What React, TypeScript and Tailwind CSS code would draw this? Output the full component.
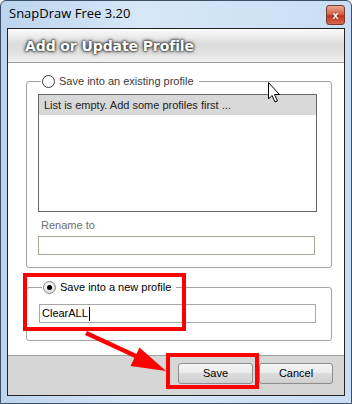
import React from "react";

const ui = "font-['Liberation_Sans',Arial,sans-serif]";

const Radio: React.FC<{ checked?: boolean }> = ({ checked }) => (
  <span
    className={`inline-flex h-[13px] w-[13px] items-center justify-center rounded-full border ${
      checked
        ? "border-[#8a8a8a] bg-[radial-gradient(circle_at_40%_35%,#ffffff,#cfcfcf)]"
        : "border-[#3c3c3c] bg-white"
    }`}
  >
    {checked && <span className="h-[5px] w-[5px] rounded-full bg-black" />}
  </span>
);

const Button: React.FC<{ label: string; className?: string }> = ({ label, className }) => (
  <button
    className={`h-[21px] rounded-[3px] border border-[#8d8d8d] bg-[linear-gradient(#f4f4f4,#ebebeb_50%,#dcdcdc_50%,#cfcfcf)] text-[11px] text-black ${className ?? ""}`}
  >
    {label}
  </button>
);

export default function App() {
  return (
    <div className={`relative h-[404px] w-[352px] overflow-hidden ${ui}`}>
      <div className="flex h-full flex-col rounded-t-[6px] border border-[#3d4f66] bg-[linear-gradient(90deg,#bcd4ee,#d6e7f8_40%,#c9def4)]">
        {/* title bar */}
        <div className="flex h-[27px] shrink-0 items-start justify-between pl-[8px] pr-[6px]">
          <span className="mt-[5px] font-['Open_Sans',sans-serif] text-[13px] leading-[15px] text-black">
            SnapDraw Free 3.20
          </span>
          <span className="mt-[4px] flex h-[20px] w-[19px] items-center justify-center rounded-[3px] border border-[#7a3a2e] bg-[linear-gradient(#e9a793,#d8654c_45%,#c4341d_55%,#d66a4f)] text-[11px] font-bold leading-none text-white [text-shadow:0_0_2px_#5a1a0a]">
            x
          </span>
        </div>

        {/* client area */}
        <div className="mx-[6px] mb-[7px] flex flex-1 flex-col border border-[#222] bg-white">
          <div className="flex h-[34px] shrink-0 items-center border-b border-[#9a9a9a] bg-[linear-gradient(#fbfbfb,#dcdcdc_45%,#e2e2e2_75%,#f2f2f2)] pl-[17px]">
            <span className="pt-[1px] font-['DejaVu_Sans',sans-serif] text-[14px] font-bold tracking-[-0.1px] text-white [text-shadow:0_0_2px_#222,0_0_3px_#333,0_0_4px_#555]">
              Add or Update Profile
            </span>
          </div>

          <div className="flex flex-1 flex-col pl-[18px] pr-[12px] pt-[12px] text-[11px] text-black">
            <fieldset className="rounded-[3px] border border-[#a3a3a3] px-[11px] pb-[12px] pt-[6px]">
              <legend className="ml-[3px] flex items-center gap-[4px] px-[1px] text-[11px] leading-[13px] text-[#3a3a3a]">
                <Radio />
                <span className="pr-[4px]">Save into an existing profile</span>
              </legend>
              <div className="h-[118px] w-[279px] border border-[#666] bg-white">
                <div className="flex h-[20px] items-center bg-[#d8d8d8] pl-[5px] text-[#222]">
                  List is empty. Add some profiles first ...
                </div>
              </div>
              <div className="mt-[7px] pl-[3px] leading-[13px] text-[#6d6d6d]">Rename to</div>
              <div className="mt-[4px] h-[19px] w-[277px] border border-[#a8a896] bg-white" />
            </fieldset>

            <fieldset className="mt-[13px] rounded-[3px] border border-[#a3a3a3] px-[12px] pb-[17px] pt-[10px]">
              <legend className="ml-[3px] flex items-center gap-[4px] px-[1px] text-[11px] leading-[13px] text-black">
                <Radio checked />
                <span className="pr-[4px]">Save into a new profile</span>
              </legend>
              <div className="flex h-[19px] w-[277px] items-center border border-[#a8a8a8] bg-white pl-[2px] text-black">
                ClearALL
                <span className="ml-[1px] h-[14px] w-px bg-black" />
              </div>
            </fieldset>
          </div>

          <div className="flex h-[40px] shrink-0 items-start justify-end gap-[6px] border-t border-[#a0a0a0] bg-[#d6d6d6] pr-[11px] pt-[7px]">
            <Button label="Save" className="w-[75px]" />
            <Button label="Cancel" className="w-[74px]" />
          </div>
        </div>
      </div>

      {/* annotations */}
      <div className="pointer-events-none absolute left-[23px] top-[273px] h-[58px] w-[163px] border-[4px] border-[#ff0000]" />
      <div className="pointer-events-none absolute left-[166px] top-[353px] h-[36px] w-[93px] border-[4px] border-[#ff0000]" />
      <svg className="pointer-events-none absolute left-0 top-0" width="352" height="404">
        <line x1="86" y1="333" x2="140" y2="358" stroke="#ff0000" strokeWidth="4.5" />
        <polygon points="166,371 139.5,347.5 130.5,366" fill="#ff0000" />
        <path
          d="M268.5 82.5 L268.5 99 L272 95.5 L275 102 L277.5 101 L274.5 94.5 L279.5 94.5 Z"
          fill="#fff"
          stroke="#000"
          strokeWidth="1"
          strokeLinejoin="round"
        />
      </svg>
    </div>
  );
}
